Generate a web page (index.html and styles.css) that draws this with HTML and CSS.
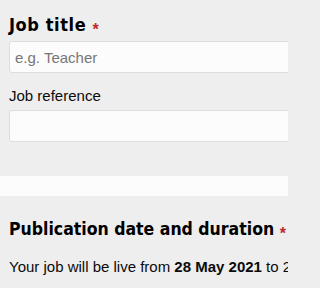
FILE: index.html
```html
<!DOCTYPE html>
<html>
<head>
<meta charset="utf-8">
<link rel="stylesheet" href="styles.css">
</head>
<body>
<div class="page">
<section class="panel">
  <h2 class="heading heading-short">Job title <span class="req">*</span></h2>
  <input class="field" type="text" placeholder="e.g. Teacher">
  <label class="label">Job reference</label>
  <input class="field" type="text">
</section>
<div class="band"></div>
<section class="panel second">
  <h2 class="heading heading-long">Publication date and duration <span class="req">*</span></h2>
  <p class="text">Your job will be live from <b>28 May 2021</b> to 28 June 2021</p>
</section>
</div>
</body>
</html>
```
FILE: styles.css
```css
html, body {
  margin: 0;
  padding: 0;
  background: #eeeeee;
  font-family: "Liberation Sans", Arial, sans-serif;
  color: #0b0b0b;
}
.page {
  width: 288px;
  height: 288px;
  overflow: hidden;
}
.panel {
  padding: 14px 0 34px 9px;
  display: flex;
  flex-direction: column;
  align-items: flex-start;
}
.heading {
  margin: 0;
  font-family: "DejaVu Sans Condensed", "DejaVu Sans", sans-serif;
  font-stretch: condensed;
  font-size: 18px;
  line-height: 22px;
  font-weight: bold;
  white-space: nowrap;
  color: #000;
}
.heading-short {
  letter-spacing: 0.6px;
}
.heading-long {
  font-size: 17.5px;
}
.req {
  color: #c0282d;
  font-family: "Liberation Sans", Arial, sans-serif;
  font-size: 16px;
  letter-spacing: 0;
  line-height: 1px;
  vertical-align: -4px;
}
.field {
  box-sizing: border-box;
  height: 32px;
  margin: 5px 0 0 0;
  padding: 0 5px;
  border: 1px solid #dddddd;
  border-radius: 3px;
  background: #fcfcfc;
  font-family: "Liberation Sans", Arial, sans-serif;
  font-size: 15px;
  width: 400px;
  flex-shrink: 0;
  outline: none;
}
.field::placeholder {
  color: #777777;
}
.label {
  margin-top: 14px;
  font-size: 15px;
  line-height: 18px;
}
.band {
  height: 20px;
  background: #fcfcfc;
}
.second {
  padding-top: 22px;
}
.text {
  margin: 18px 0 0 0;
  font-size: 15px;
  line-height: 18px;
  white-space: nowrap;
}
```
